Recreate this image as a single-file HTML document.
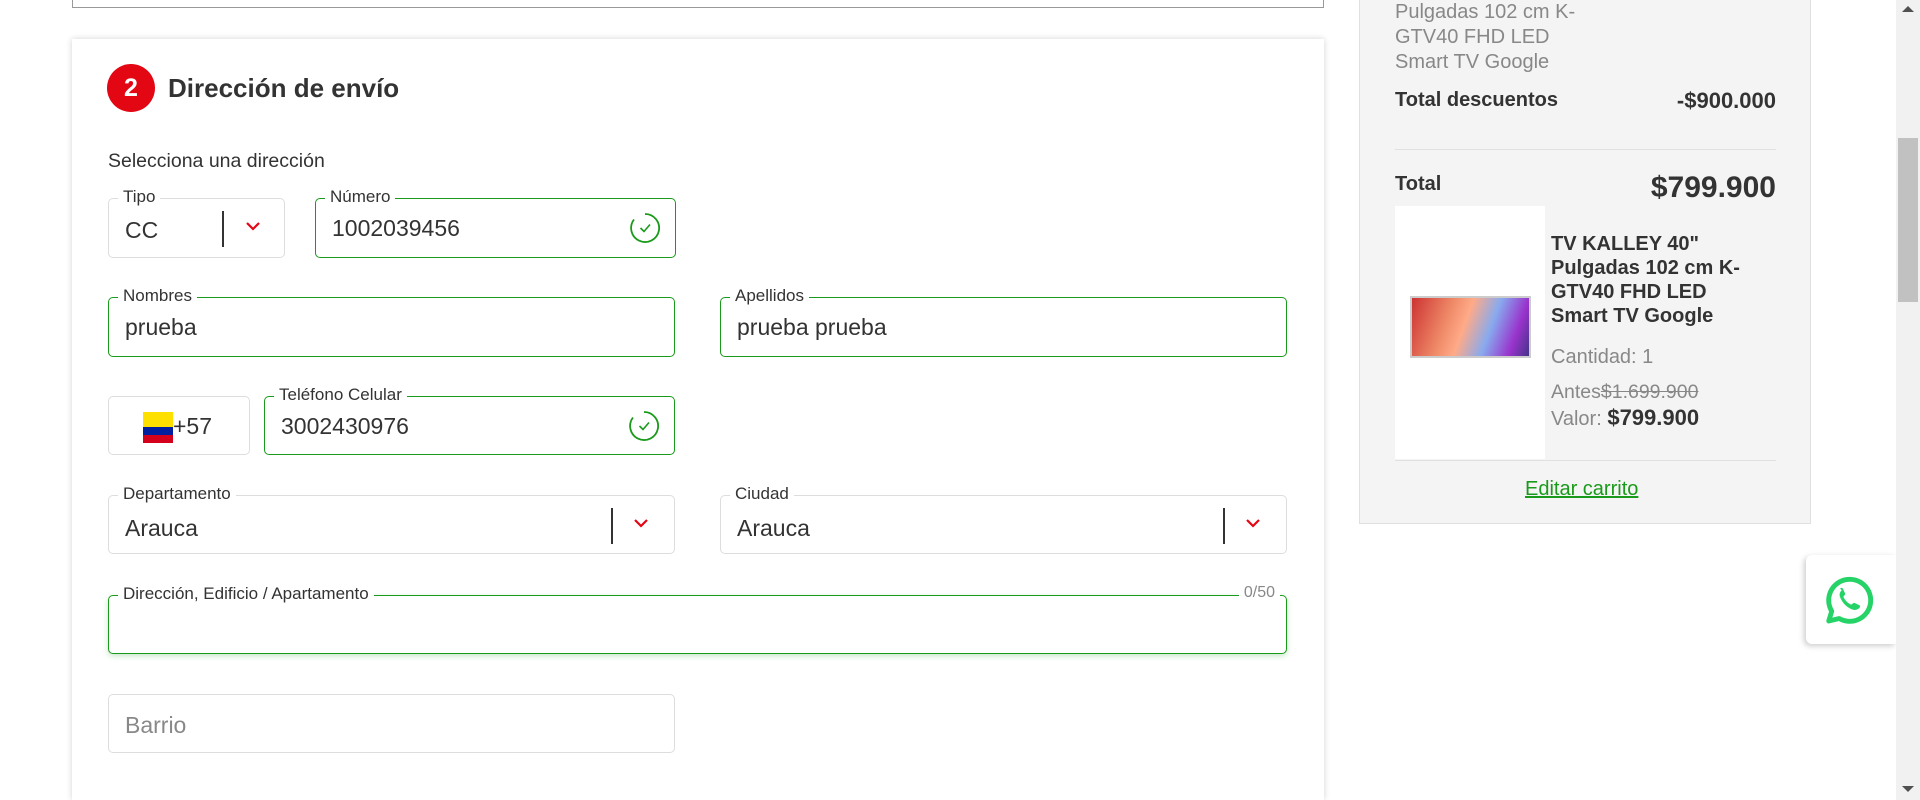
<!DOCTYPE html>
<html style="overflow:hidden;width:1920px;height:800px"><head><meta charset="utf-8"><style>
*{box-sizing:border-box;margin:0;padding:0}
body{width:1920px;height:800px;overflow:hidden;background:#fff;font-family:"Liberation Sans",Arial,sans-serif;color:#333;position:relative}
.a{position:absolute}
.topbox{left:72px;top:-10px;width:1252px;height:18px;border:1px solid #999;border-top:none}
.card{left:72px;top:39px;width:1252px;height:761px;background:#fff;box-shadow:0 0 6px rgba(0,0,0,.18)}
.f{position:absolute;border:1px solid #ddd;border-radius:5px;background:#fff}
.f.g{border:1.5px solid #1a9a1a}
.lbl{position:absolute;top:-12px;left:9px;background:#fff;padding:0 5px;font-size:17px;color:#333;line-height:20px}
.val{position:absolute;left:16px;top:15px;font-size:23px;color:#333;line-height:28px}
.chk{position:absolute;right:14px;top:13px;width:32px;height:32px}
.sel{position:absolute;top:12px;width:2px;height:36px;background:#333}
.arr{position:absolute;top:23px;width:14px;height:9px}
.rp{left:1359px;top:-2px;width:452px;height:526px;background:#f4f4f4;border:1px solid #e0e0e0}
.rt{font-size:20px;line-height:25px}
</style></head><body>
<div class="a topbox"></div>
<div class="a card"></div>
<div class="a" style="left:107px;top:64px;width:48px;height:48px;border-radius:50%;background:#e30613;color:#fff;font-weight:bold;font-size:25px;text-align:center;line-height:48px">2</div>
<div class="a" style="left:168px;top:73px;font-size:26px;font-weight:bold;color:#333">Dirección de envío</div>
<div class="a" style="left:108px;top:150px;font-size:19.5px;color:#333">Selecciona una dirección</div>

<div class="f" style="left:108px;top:198px;width:177px;height:60px"><div class="lbl">Tipo</div><div class="val" style="top:17px">CC</div><div class="sel" style="left:113px"></div>
<svg class="arr" style="left:137px" viewBox="0 0 14 9"><path d="M1 1l6 6 6-6" stroke="#e30613" stroke-width="2.2" fill="none"/></svg></div>
<div class="f g" style="left:315px;top:198px;width:361px;height:60px"><div class="lbl">Número</div><div class="val">1002039456</div>
<svg class="chk" viewBox="0 0 32 32"><path d="M16 2A14 14 0 1 1 5 7.5" stroke="#1a9a1a" stroke-width="1.8" fill="none"/><path d="M11.5 16l3.5 3.5 6-7" stroke="#1a9a1a" stroke-width="1.6" fill="none"/></svg></div>

<div class="f g" style="left:108px;top:297px;width:567px;height:60px"><div class="lbl">Nombres</div><div class="val">prueba</div></div>
<div class="f g" style="left:720px;top:297px;width:567px;height:60px"><div class="lbl">Apellidos</div><div class="val">prueba prueba</div></div>

<div class="f" style="left:108px;top:396px;width:142px;height:59px">
<div class="a" style="left:34px;top:15px;width:30px;height:15px;background:#fde000"></div>
<div class="a" style="left:34px;top:30px;width:30px;height:8px;background:#00209f"></div>
<div class="a" style="left:34px;top:38px;width:30px;height:8px;background:#d5001c"></div>
<div class="val" style="left:64px;top:15px">+57</div></div>
<div class="f g" style="left:264px;top:396px;width:411px;height:59px"><div class="lbl">Teléfono Celular</div><div class="val">3002430976</div>
<svg class="chk" viewBox="0 0 32 32"><path d="M16 2A14 14 0 1 1 5 7.5" stroke="#1a9a1a" stroke-width="1.8" fill="none"/><path d="M11.5 16l3.5 3.5 6-7" stroke="#1a9a1a" stroke-width="1.6" fill="none"/></svg></div>

<div class="f" style="left:108px;top:495px;width:567px;height:59px"><div class="lbl">Departamento</div><div class="val" style="top:18px">Arauca</div><div class="sel" style="left:502px"></div>
<svg class="arr" style="left:525px" viewBox="0 0 14 9"><path d="M1 1l6 6 6-6" stroke="#e30613" stroke-width="2.2" fill="none"/></svg></div>
<div class="f" style="left:720px;top:495px;width:567px;height:59px"><div class="lbl">Ciudad</div><div class="val" style="top:18px">Arauca</div><div class="sel" style="left:502px"></div>
<svg class="arr" style="left:525px" viewBox="0 0 14 9"><path d="M1 1l6 6 6-6" stroke="#e30613" stroke-width="2.2" fill="none"/></svg></div>

<div class="f g" style="left:108px;top:595px;width:1179px;height:59px;box-shadow:0 2px 6px rgba(26,154,26,.25)"><div class="lbl">Dirección, Edificio / Apartamento</div>
<div class="a" style="right:6px;top:-12px;background:#fff;padding:0 5px;font-size:16px;color:#888">0/50</div></div>
<div class="f" style="left:108px;top:694px;width:567px;height:59px"><div class="val" style="color:#888;top:16px">Barrio</div></div>

<div class="a rp"></div>
<div class="a rt" style="left:1395px;top:0;color:#888">Pulgadas 102 cm K-<br>GTV40 FHD LED<br>Smart TV Google</div>
<div class="a rt" style="left:1395px;top:88px;font-weight:bold">Total descuentos</div>
<div class="a rt" style="left:1640px;top:88px;width:136px;text-align:right;font-weight:bold;font-size:22px">-$900.000</div>
<div class="a" style="left:1395px;top:149px;width:381px;height:1px;background:#e0e0e0"></div>
<div class="a rt" style="left:1395px;top:172px;font-weight:bold">Total</div>
<div class="a" style="left:1560px;top:171px;width:216px;text-align:right;font-weight:bold;font-size:30px">$799.900</div>
<div class="a" style="left:1395px;top:206px;width:150px;height:253px;background:#fff"></div>
<div class="a" style="left:1410px;top:296px;width:121px;height:62px;background:linear-gradient(110deg,#c33 0%,#e86 30%,#fa8 45%,#8ae 65%,#93c 85%,#438 100%);border:2px solid #ccc"></div>
<div class="a rt" style="left:1551px;top:232px;font-weight:bold;color:#333;line-height:24px;font-size:20px">TV KALLEY 40"<br>Pulgadas 102 cm K-<br>GTV40 FHD LED<br>Smart TV Google</div>
<div class="a rt" style="left:1551px;top:345px;color:#888">Cantidad: 1</div>
<div class="a rt" style="left:1551px;top:380px;color:#888;font-size:19.5px">Antes<s>$1.699.900</s></div>
<div class="a rt" style="left:1551px;top:405px;color:#888">Valor: <b style="color:#333;font-size:22px">$799.900</b></div>
<div class="a" style="left:1395px;top:460px;width:381px;height:1px;background:#e0e0e0"></div>
<div class="a" style="left:1525px;top:478px;font-size:20px;color:#1a9a1a;text-decoration:underline">Editar carrito</div>

<div class="a" style="left:1806px;top:555px;width:90px;height:89px;background:#fff;border-radius:6px 0 0 6px;box-shadow:-2px 2px 6px rgba(0,0,0,.2)"></div>
<svg class="a" style="left:1820px;top:572px" width="56" height="56" viewBox="0 0 32 32"><path d="M5 28l1.7-5.6A12 12 0 1 1 11 26.6z" fill="none" stroke="#25d366" stroke-width="2.8" stroke-linejoin="round"/><path d="M11.5 9.5c.6-.6 1.3-.5 1.6.1l1.2 2.6c.2.5-.1.9-.5 1.3-.4.4-.5.7-.2 1.2.9 1.6 2.1 2.8 3.7 3.7.5.3.8.2 1.2-.2.4-.4.8-.7 1.3-.5l2.6 1.2c.6.3.7 1 .1 1.6-1 1.1-2.5 1.5-4 .9-3.2-1.2-5.7-3.7-7-7-.6-1.5-.2-3 .9-4z" fill="#25d366"/></svg>

<div class="a" style="left:1896px;top:0;width:24px;height:800px;background:#f1f1f1"></div>
<div class="a" style="left:1898px;top:138px;width:20px;height:164px;background:#c1c1c1"></div>
<div class="a" style="left:1902px;top:6px;border-left:6px solid transparent;border-right:6px solid transparent;border-bottom:6px solid #505050"></div>
<div class="a" style="left:1902px;top:786px;border-left:6px solid transparent;border-right:6px solid transparent;border-top:6px solid #505050"></div>
</body></html>
